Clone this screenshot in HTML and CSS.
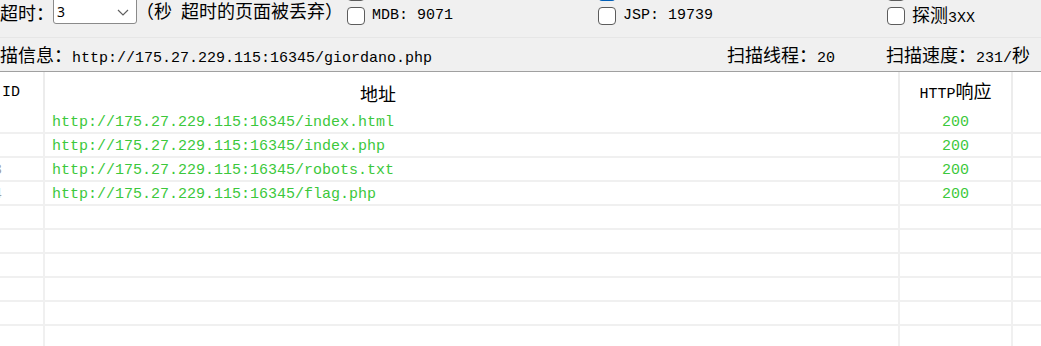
FILE: index.html
```html
<!DOCTYPE html>
<html lang="zh-CN">

<head>
    <meta charset="UTF-8">
    <title>扫描结果</title>
    <link rel="stylesheet" href="styles.css">
</head>

<body>
    <div class="toolbar">
        <div class="timeout">
            <span class="cn">超时：</span>
            <div class="combo">
                <span class="combo-value">3</span>
                <svg class="chevron" width="12" height="7" viewBox="0 0 12 7">
                    <polyline points="1,1 6,6 11,1" fill="none" stroke="#606060" stroke-width="1.2" />
                </svg>
            </div>
            <span class="cn">（秒<span class="gap"> </span>超时的页面被丢弃）</span>
        </div>
        <div class="options">
            <span class="opt"><i class="check"></i></span>
            <span class="opt"><i class="check checked"></i></span>
            <span class="opt"><i class="check"></i></span>
            <label class="opt"><i class="check"></i><span>MDB: 9071</span></label>
            <label class="opt"><i class="check"></i><span>JSP: 19739</span></label>
            <label class="opt"><i class="check"></i><span><span class="cn">探测</span>3XX</span></label>
        </div>
    </div>

    <div class="status">
        <div class="info"><span class="cn">扫描信息：</span>http://175.27.229.115:16345/giordano.php</div>
        <div><span class="cn">扫描线程：</span>20</div>
        <div><span class="cn">扫描速度：</span>231/<span class="cn">秒</span></div>
    </div>

    <div class="list">
        <div class="head">
            <div class="cell id-col"><span>ID</span></div>
            <div class="cell addr-head"><span class="cn">地址</span></div>
            <div class="cell code"><span>HTTP<span class="cn">响应</span></span></div>
            <div class="cell"></div>
        </div>
        <div class="row">
            <div class="cell id-col"></div>
            <div class="cell url">http://175.27.229.115:16345/index.html</div>
            <div class="cell code">200</div>
            <div class="cell"></div>
        </div>
        <div class="row">
            <div class="cell id-col"></div>
            <div class="cell url">http://175.27.229.115:16345/index.php</div>
            <div class="cell code">200</div>
            <div class="cell"></div>
        </div>
        <div class="row">
            <div class="cell id-col"><span class="num">3</span></div>
            <div class="cell url">http://175.27.229.115:16345/robots.txt</div>
            <div class="cell code">200</div>
            <div class="cell"></div>
        </div>
        <div class="row">
            <div class="cell id-col"><span class="num">4</span></div>
            <div class="cell url">http://175.27.229.115:16345/flag.php</div>
            <div class="cell code">200</div>
            <div class="cell"></div>
        </div>
        <div class="row"><div class="cell id-col"></div><div class="cell"></div><div class="cell"></div><div class="cell"></div></div>
        <div class="row"><div class="cell id-col"></div><div class="cell"></div><div class="cell"></div><div class="cell"></div></div>
        <div class="row"><div class="cell id-col"></div><div class="cell"></div><div class="cell"></div><div class="cell"></div></div>
        <div class="row"><div class="cell id-col"></div><div class="cell"></div><div class="cell"></div><div class="cell"></div></div>
        <div class="row"><div class="cell id-col"></div><div class="cell"></div><div class="cell"></div><div class="cell"></div></div>
        <div class="row"><div class="cell id-col"></div><div class="cell"></div><div class="cell"></div><div class="cell"></div></div>
    </div>
</body>

</html>
```

FILE: styles.css
```css
body {
    margin: 0;
    width: 1041px;
    height: 346px;
    overflow: hidden;
    background: #f0f0f0;
    font-family: "Liberation Mono", "Noto Sans CJK SC", monospace;
    font-size: 15px;
    line-height: 20px;
    color: #000;
}

.cn {
    font-family: "Noto Sans CJK SC", sans-serif;
    font-size: 18px;
    line-height: 20px;
}

.gap {
    font-family: "Liberation Mono", monospace;
    font-size: 15px;
}

/* top options bar */
.toolbar {
    display: flex;
    height: 37px;
    overflow: hidden;
}

.timeout {
    display: flex;
    align-items: center;
    width: 347px;
    height: 24px;
}

.combo {
    display: flex;
    align-items: center;
    justify-content: space-between;
    box-sizing: border-box;
    width: 84px;
    height: 27px;
    margin: -3px -1px 0 -1px;
    padding: 3px 7px 0 3px;
    background: #fff;
    border: 1px solid #8a8a8a;
    border-radius: 3px;
}

.combo-value {
    font-family: "Noto Sans", sans-serif;
    font-size: 14px;
}

.options {
    display: grid;
    grid-template-columns: 251px 289px 1fr;
    grid-auto-rows: 24px;
    margin-top: -17px;
}

.opt {
    display: flex;
    align-items: center;
    height: 18px;
    gap: 7px;
}

.check {
    box-sizing: border-box;
    width: 18px;
    height: 18px;
    background: #fff;
    border: 1px solid #5c5c5c;
    border-radius: 4px;
}

.check.checked {
    background: #005fb8;
    border-color: #005fb8;
}

/* scan status line */
.status {
    display: grid;
    grid-template-columns: 727px 159px 1fr;
    align-items: center;
    box-sizing: border-box;
    height: 35px;
    padding-top: 4px;
    border-top: 1px solid #e6e6e6;
    border-bottom: 1px solid #a0a0a0;
}

.info {
    overflow: hidden;
    white-space: nowrap;
}

.info .cn {
    margin-left: -18px;
}

/* results list */
.list {
    background: #fff;
    height: 274px;
    overflow: hidden;
}

.head,
.row {
    display: grid;
    grid-template-columns: 45px 855px 113px 1fr;
}

.head {
    height: 38px;
}

.row {
    box-sizing: border-box;
    height: 24px;
    padding-top: 3px;
    border-bottom: 2px solid #f0f0f0;
}

.cell {
    display: flex;
    align-items: center;
    box-sizing: border-box;
    overflow: hidden;
    white-space: nowrap;
    border-right: 2px solid #f0f0f0;
}

.row .cell {
    margin-top: -3px;
    padding-top: 3px;
    color: #3cc83c;
}

.cell:last-child {
    border-right: none;
}

.head .cell {
    padding-top: 3px;
    border-right-color: #ececec;
}

.id-col {
    padding-left: 2px;
}

.row .num {
    margin-left: -9px;
    color: #a0a0a0;
}

.addr-head {
    padding-left: 315px;
}

.code {
    justify-content: center;
}

.url {
    padding-left: 7px;
}
```
